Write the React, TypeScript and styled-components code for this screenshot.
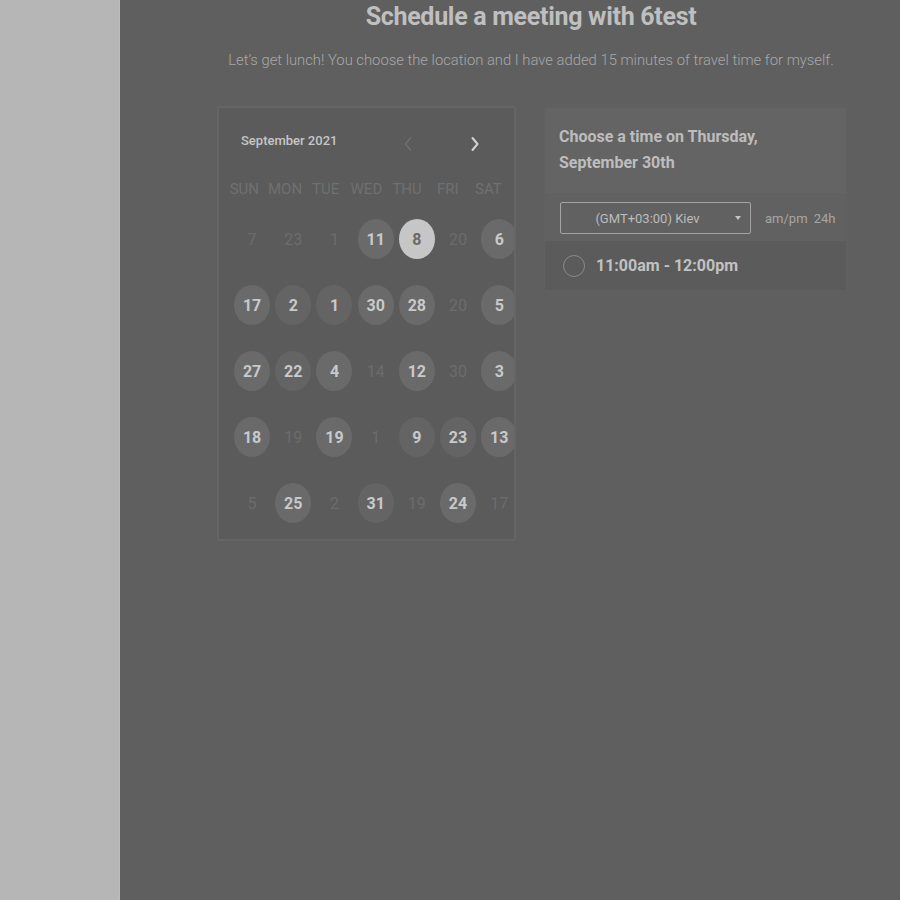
import React from "react";
import styled, { createGlobalStyle } from "styled-components";

const Global = createGlobalStyle`
  html, body { margin: 0; padding: 0; background: #5f5f5f; }
  body { font-family: Roboto, "Liberation Sans", sans-serif; }
`;

const Layout = styled.div`
  display: grid;
  grid-template-columns: 120px 1fr;
  height: 900px;
  width: 900px;
  overflow: hidden;
`;

const Sidebar = styled.aside`
  background: #b6b6b6;
  border-right: 1px solid #bdbdbd;
`;

const Main = styled.main`
  background: #5f5f5f;
  padding-top: 3px;
`;

const Wrapper = styled.div`
  width: 628px;
  margin-left: 97px;
  display: flex;
  flex-direction: column;
  align-items: center;
`;

const Title = styled.h1`
  margin: 0;
  font-size: 25px;
  line-height: 28px;
  font-weight: 700;
  color: #bfbfbf;
  letter-spacing: -0.3px;
  white-space: nowrap;
`;

const Subtitle = styled.p`
  margin: 19px 0 0;
  font-size: 14.8px;
  line-height: 20px;
  font-weight: 300;
  color: #a8a8a8;
  white-space: nowrap;
`;

const Panels = styled.div`
  margin-top: 36px;
  width: 100%;
  display: flex;
  align-items: flex-start;
  gap: 27px;
`;

const CalendarCard = styled.section`
  box-sizing: border-box;
  flex: 0 0 299px;
  height: 435px;
  background: #5b5b5b;
  border: 2px solid #656565;
  border-radius: 3px;
  padding: 24px 0 0 0;
  overflow: hidden;
`;

const CalHeader = styled.div`
  display: flex;
  align-items: center;
  height: 24px;
  padding-left: 22px;
`;

const Month = styled.div`
  font-size: 13px;
  font-weight: 500;
  color: #c6c6c6;
  margin-top: -8px;
  width: 157px;
`;

const NavBtn = styled.button<{ $active?: boolean }>`
  background: none;
  border: 0;
  padding: 0;
  width: 20px;
  height: 20px;
  display: flex;
  align-items: center;
  justify-content: center;
  color: ${(p) => (p.$active ? "#d2d2d2" : "#707070")};
  cursor: pointer;
`;

const NavGroup = styled.div`
  display: flex;
  gap: 47px;
`;

const Weekdays = styled.div`
  display: grid;
  grid-template-columns: repeat(7, 40.7px);
  margin-top: 23px;
  padding-left: 5px;
`;

const Weekday = styled.div`
  text-align: center;
  font-size: 15px;
  line-height: 20px;
  color: #707070;
`;

const Days = styled.div`
  display: grid;
  grid-template-columns: repeat(7, 41.2px);
  grid-auto-rows: 66px;
  margin-top: 7px;
  padding-left: 12.5px;
`;

const DayCell = styled.div`
  display: flex;
  align-items: center;
  justify-content: center;
`;

type DayKind = "off" | "on" | "tex" | "sel";

const Day = styled.div<{ $kind: DayKind }>`
  width: 36px;
  height: 40px;
  border-radius: 50%;
  display: flex;
  align-items: center;
  justify-content: center;
  font-size: 16px;
  font-weight: ${(p) => (p.$kind === "off" ? 400 : 700)};
  color: ${(p) =>
    p.$kind === "off" ? "#6c6c6c" : p.$kind === "sel" ? "#6a6a6a" : "#c9c9c9"};
  background: ${(p) =>
    p.$kind === "off"
      ? "transparent"
      : p.$kind === "sel"
      ? "#c6c6c6"
      : p.$kind === "tex"
      ? "#646464"
      : "#6a6a6a"};
`;

const TimeCard = styled.section`
  box-sizing: border-box;
  flex: 0 0 298px;
  border: 2px solid #606060;
  border-radius: 3px;
  background: #5b5b5b;
`;

const TimeHeader = styled.div`
  background: #646464;
  padding: 16px 14px 17px 14px;
  font-size: 16px;
  line-height: 26px;
  font-weight: 700;
  color: #bdbdbd;
`;

const TzRow = styled.div`
  background: #616161;
  display: flex;
  align-items: center;
  gap: 14px;
  padding: 9px 10px 7px 15px;
`;

const Select = styled.div`
  box-sizing: border-box;
  flex: 0 0 191px;
  height: 32px;
  border: 1px solid #a3a3a3;
  border-radius: 2px;
  display: flex;
  align-items: center;
  justify-content: center;
  position: relative;
  font-size: 13px;
  color: #bcbcbc;
  padding-right: 16px;
`;

const Caret = styled.span`
  position: absolute;
  right: 9px;
  top: 13px;
  width: 0;
  height: 0;
  border-left: 3.5px solid transparent;
  border-right: 3.5px solid transparent;
  border-top: 4px solid #c4c4c4;
`;

const Formats = styled.div`
  font-size: 13px;
  color: #a6a6a6;
  word-spacing: 3px;
  white-space: nowrap;
`;

const Slot = styled.div`
  display: flex;
  align-items: center;
  gap: 11px;
  height: 49px;
  padding-left: 18px;
`;

const Radio = styled.span`
  box-sizing: border-box;
  width: 22px;
  height: 22px;
  border-radius: 50%;
  border: 1.5px solid #8a8a8a;
`;

const SlotText = styled.span`
  font-size: 16px;
  font-weight: 700;
  color: #c2c2c2;
`;

const weekdays = ["SUN", "MON", "TUE", "WED", "THU", "FRI", "SAT"];

const days: [string, DayKind][] = [
  ["7", "off"], ["23", "off"], ["1", "off"], ["11", "on"], ["8", "sel"], ["20", "off"], ["6", "on"],
  ["17", "on"], ["2", "tex"], ["1", "tex"], ["30", "on"], ["28", "on"], ["20", "off"], ["5", "on"],
  ["27", "on"], ["22", "tex"], ["4", "on"], ["14", "off"], ["12", "on"], ["30", "off"], ["3", "on"],
  ["18", "on"], ["19", "off"], ["19", "on"], ["1", "off"], ["9", "tex"], ["23", "tex"], ["13", "on"],
  ["5", "off"], ["25", "on"], ["2", "off"], ["31", "tex"], ["19", "off"], ["24", "on"], ["17", "off"],
];

const Chevron = ({ dir }: { dir: "left" | "right" }) => (
  <svg width="10" height="16" viewBox="0 0 10 16" fill="none">
    <polyline
      points={dir === "left" ? "7.5,2 2.5,8 7.5,14" : "2.5,2 7.5,8 2.5,14"}
      stroke="currentColor"
      strokeWidth={dir === "left" ? 1.5 : 2}
      strokeLinecap="round"
      strokeLinejoin="round"
    />
  </svg>
);

export default function App() {
  return (
    <>
      <Global />
      <Layout>
        <Sidebar />
        <Main>
          <Wrapper>
            <Title>Schedule a meeting with 6test</Title>
            <Subtitle>
              Let’s get lunch! You choose the location and I have added 15 minutes of travel time for myself.
            </Subtitle>
            <Panels>
              <CalendarCard>
                <CalHeader>
                  <Month>September 2021</Month>
                  <NavGroup>
                    <NavBtn aria-label="Previous month">
                      <Chevron dir="left" />
                    </NavBtn>
                    <NavBtn $active aria-label="Next month">
                      <Chevron dir="right" />
                    </NavBtn>
                  </NavGroup>
                </CalHeader>
                <Weekdays>
                  {weekdays.map((w) => (
                    <Weekday key={w}>{w}</Weekday>
                  ))}
                </Weekdays>
                <Days>
                  {days.map(([n, k], i) => (
                    <DayCell key={i}>
                      <Day $kind={k}>{n}</Day>
                    </DayCell>
                  ))}
                </Days>
              </CalendarCard>
              <TimeCard>
                <TimeHeader>
                  Choose a time on Thursday,
                  <br />
                  September 30th
                </TimeHeader>
                <TzRow>
                  <Select>
                    (GMT+03:00) Kiev
                    <Caret />
                  </Select>
                  <Formats>am/pm 24h</Formats>
                </TzRow>
                <Slot>
                  <Radio />
                  <SlotText>11:00am - 12:00pm</SlotText>
                </Slot>
              </TimeCard>
            </Panels>
          </Wrapper>
        </Main>
      </Layout>
    </>
  );
}
